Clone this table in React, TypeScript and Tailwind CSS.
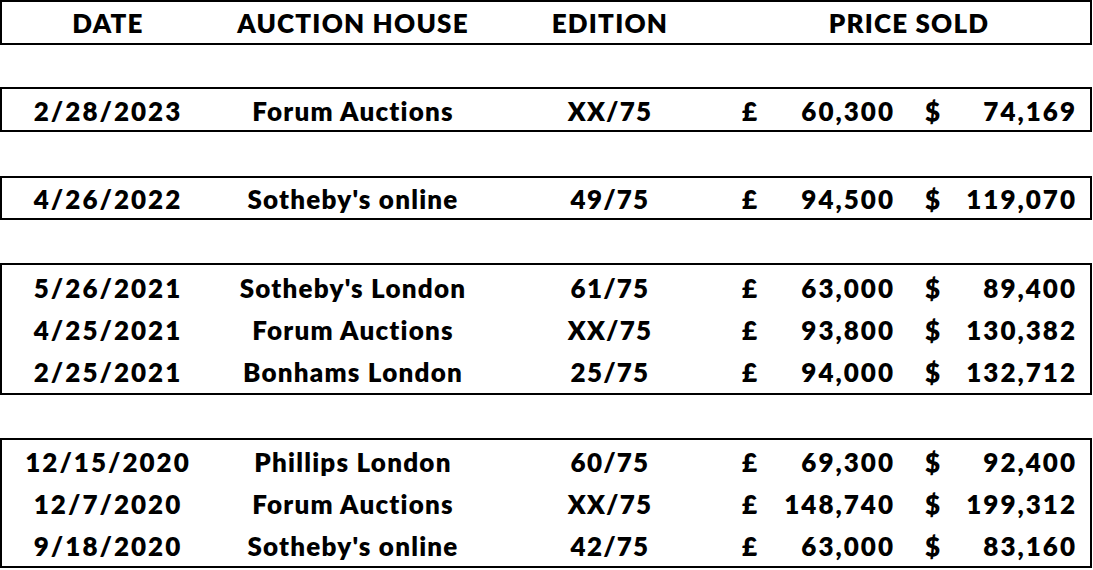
const cols = "grid grid-cols-[212px_278px_236px_180px_182px]"

type Sale = { date: string; house: string; edition: string; gbp: string; usd: string }

const groups: { sales: Sale[]; box: string; gap: string; pad: string }[] = [
  {
    box: "h-[45px]",
    gap: "mt-[42px]",
    pad: "pt-[1px]",
    sales: [{ date: "2/28/2023", house: "Forum Auctions", edition: "XX/75", gbp: "60,300", usd: "74,169" }],
  },
  {
    box: "h-[44px]",
    gap: "mt-[44px]",
    pad: "pt-0",
    sales: [{ date: "4/26/2022", house: "Sotheby's online", edition: "49/75", gbp: "94,500", usd: "119,070" }],
  },
  {
    box: "h-[132px]",
    gap: "mt-[43px]",
    pad: "pt-[2px]",
    sales: [
      { date: "5/26/2021", house: "Sotheby's London", edition: "61/75", gbp: "63,000", usd: "89,400" },
      { date: "4/25/2021", house: "Forum Auctions", edition: "XX/75", gbp: "93,800", usd: "130,382" },
      { date: "2/25/2021", house: "Bonhams London", edition: "25/75", gbp: "94,000", usd: "132,712" },
    ],
  },
  {
    box: "h-[130px]",
    gap: "mt-[43px]",
    pad: "pt-[1px]",
    sales: [
      { date: "12/15/2020", house: "Phillips London", edition: "60/75", gbp: "69,300", usd: "92,400" },
      { date: "12/7/2020", house: "Forum Auctions", edition: "XX/75", gbp: "148,740", usd: "199,312" },
      { date: "9/18/2020", house: "Sotheby's online", edition: "42/75", gbp: "63,000", usd: "83,160" },
    ],
  },
]

const Row = ({ sale }: { sale: Sale }) => {
  return (
    <div className={`${cols} h-[42px] items-center`}>
      <span className="text-center tracking-[2px]">{sale.date}</span>
      <span className="text-center">{sale.house}</span>
      <span className="text-center">{sale.edition}</span>
      <div className="flex justify-between pl-[14px] pr-[13px]">
        <span>£</span>
        <span className="tracking-[2px]">{sale.gbp}</span>
      </div>
      <div className="flex justify-between pl-[17px] pr-[13px]">
        <span>$</span>
        <span className="tracking-[2px]">{sale.usd}</span>
      </div>
    </div>
  )
}

const App = () => {
  return (
    <div className="w-[1093px] h-[570px] bg-white text-black font-extrabold text-[26px] tracking-[1.2px] leading-none font-['Lato',sans-serif]">
      <div className={`${cols} w-[1092px] h-[45px] border-2 border-black items-center`}>
        <span className="text-center">DATE</span>
        <span className="text-center">AUCTION HOUSE</span>
        <span className="text-center">EDITION</span>
        <span className="col-span-2 text-center">PRICE SOLD</span>
      </div>

      {groups.map((g, i) => (
        <div key={i} className={`w-[1092px] border-2 border-black ${g.box} ${g.gap} ${g.pad}`}>
          {g.sales.map((s) => (
            <Row key={s.date} sale={s} />
          ))}
        </div>
      ))}
    </div>
  )
}

export default App
